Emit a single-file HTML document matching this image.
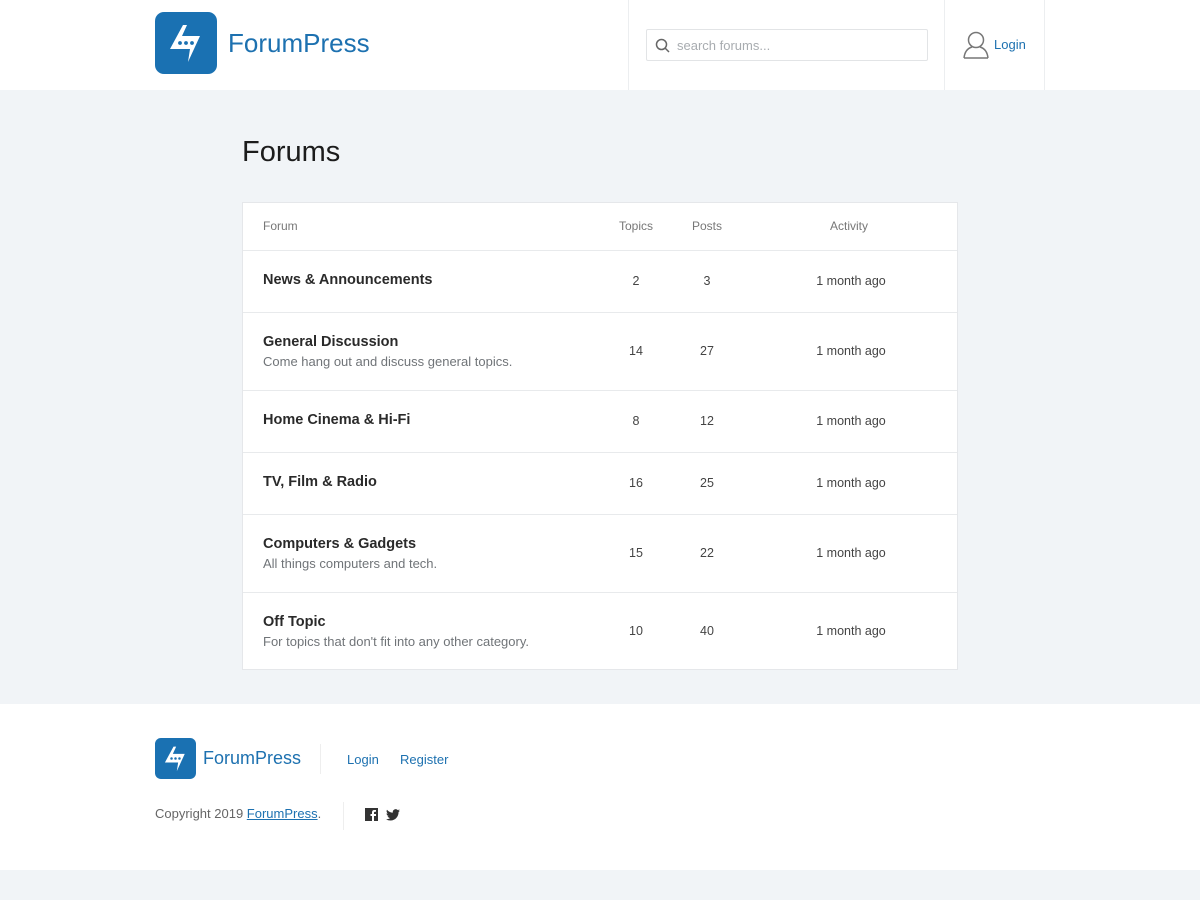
<!DOCTYPE html>
<html><head><meta charset="utf-8"><style>
*{box-sizing:border-box;margin:0;padding:0}
body{width:1200px;height:900px;background:#f1f4f7;font-family:"Liberation Sans",sans-serif;color:#222;position:relative;overflow:hidden}
.hdr{position:absolute;left:0;top:0;width:1200px;height:90px;background:#fff}
.vl{position:absolute;top:0;height:90px;width:1px;background:#eceef0}
.brand{position:absolute;font-family:"Liberation Sans",sans-serif;color:#1d71b0}
.search{position:absolute;left:646px;top:29px;width:282px;height:32px;border:1px solid #e2e4e6;border-radius:2px;background:#fff}
.search span{position:absolute;left:30px;top:8px;font-size:13px;color:#a8acb0}
h1{position:absolute;left:242px;top:136px;font-weight:normal;font-size:29px;color:#1c1c1c}
.tbl{position:absolute;left:242px;top:202px;width:716px;height:468px;background:#fff;border:1px solid #e5e7ea}
.row{position:absolute;left:0;width:714px;border-top:1px solid #e8eaec}
.t{position:absolute;left:20px;font-size:14.5px;font-weight:bold;color:#2a2a2a}
.d{position:absolute;left:20px;font-size:13px;color:#707478}
.c{position:absolute;font-size:12.5px;color:#444;text-align:center;width:80px}
.h{position:absolute;font-size:12px;color:#777;top:16px}
.ftr{position:absolute;left:0;top:704px;width:1200px;height:166px;background:#fff}
a{color:#1d71b0;text-decoration:none}
</style></head><body>
<div class="hdr">
<svg style="position:absolute;left:155px;top:12px" width="62" height="62" viewBox="0 0 62 62"><rect width="62" height="62" rx="9" fill="#1a71b2"/><path d="M28 13 H32 L27 24 H45 L33 50 L35 37 H15 Z" fill="#fff"/><circle cx="25" cy="31" r="1.9" fill="#1a71b2"/><circle cx="31" cy="31" r="1.9" fill="#1a71b2"/><circle cx="37" cy="31" r="1.9" fill="#1a71b2"/></svg>
<div class="brand" style="left:228px;top:28px;font-size:26px">ForumPress</div>
<div class="vl" style="left:628px"></div><div class="vl" style="left:944px"></div><div class="vl" style="left:1044px"></div>
<div class="search"><svg style="position:absolute;left:8px;top:8px" width="15" height="15" viewBox="0 0 15 15"><circle cx="6.5" cy="6.5" r="5" fill="none" stroke="#666" stroke-width="1.5"/><path d="M10 10L14 14" stroke="#666" stroke-width="1.5"/></svg><span>search forums...</span></div>
<svg style="position:absolute;left:962px;top:30px" width="28" height="30" viewBox="0 0 28 30"><circle cx="14" cy="10" r="7.5" fill="none" stroke="#777" stroke-width="1.5"/><path d="M2 28 Q3 19 10 17 M26 28 Q25 19 18 17 M2 28 H26" fill="none" stroke="#777" stroke-width="1.5"/></svg>
<a style="position:absolute;left:994px;top:37px;font-size:13px">Login</a>
</div>
<h1>Forums</h1>
<div class="tbl">
<div class="h" style="left:20px">Forum</div><div class="h" style="left:376px">Topics</div><div class="h" style="left:449px">Posts</div><div class="h" style="left:587px">Activity</div>
<div class="row" style="top:47px;height:62px"><div class="t" style="top:21px">News &amp; Announcements</div><div class="c" style="left:353px;top:23px">2</div><div class="c" style="left:424px;top:23px">3</div><div class="c" style="left:558px;top:23px;width:100px">1 month ago</div></div>
<div class="row" style="top:109px;height:78px"><div class="t" style="top:21px">General Discussion</div><div class="d" style="top:41px">Come hang out and discuss general topics.</div><div class="c" style="left:353px;top:31px">14</div><div class="c" style="left:424px;top:31px">27</div><div class="c" style="left:558px;top:31px;width:100px">1 month ago</div></div>
<div class="row" style="top:187px;height:62px"><div class="t" style="top:21px">Home Cinema &amp; Hi-Fi</div><div class="c" style="left:353px;top:23px">8</div><div class="c" style="left:424px;top:23px">12</div><div class="c" style="left:558px;top:23px;width:100px">1 month ago</div></div>
<div class="row" style="top:249px;height:62px"><div class="t" style="top:21px">TV, Film &amp; Radio</div><div class="c" style="left:353px;top:23px">16</div><div class="c" style="left:424px;top:23px">25</div><div class="c" style="left:558px;top:23px;width:100px">1 month ago</div></div>
<div class="row" style="top:311px;height:78px"><div class="t" style="top:21px">Computers &amp; Gadgets</div><div class="d" style="top:41px">All things computers and tech.</div><div class="c" style="left:353px;top:31px">15</div><div class="c" style="left:424px;top:31px">22</div><div class="c" style="left:558px;top:31px;width:100px">1 month ago</div></div>
<div class="row" style="top:389px;height:78px"><div class="t" style="top:21px">Off Topic</div><div class="d" style="top:41px">For topics that don't fit into any other category.</div><div class="c" style="left:353px;top:31px">10</div><div class="c" style="left:424px;top:31px">40</div><div class="c" style="left:558px;top:31px;width:100px">1 month ago</div></div>
</div>
<div class="ftr">
<svg style="position:absolute;left:155px;top:34px" width="41" height="41" viewBox="0 0 62 62"><rect width="62" height="62" rx="9" fill="#1a71b2"/><path d="M28 13 H32 L27 24 H45 L33 50 L35 37 H15 Z" fill="#fff"/><circle cx="25" cy="31" r="1.9" fill="#1a71b2"/><circle cx="31" cy="31" r="1.9" fill="#1a71b2"/><circle cx="37" cy="31" r="1.9" fill="#1a71b2"/></svg>
<div class="brand" style="left:203px;top:44px;font-size:18px">ForumPress</div>
<div style="position:absolute;left:320px;top:40px;width:1px;height:30px;background:#eee"></div>
<a style="position:absolute;left:347px;top:48px;font-size:13px">Login</a><a style="position:absolute;left:400px;top:48px;font-size:13px">Register</a>
<div style="position:absolute;left:155px;top:102px;font-size:13px;color:#666">Copyright 2019 <a style="text-decoration:underline">ForumPress</a>.</div>
<div style="position:absolute;left:343px;top:98px;width:1px;height:28px;background:#eee"></div>
<svg style="position:absolute;left:365px;top:104px" width="13" height="13" viewBox="0 0 13 13"><rect width="13" height="13" fill="#333"/><path d="M9 13V8H11V6H9V4.5Q9 3.7 10 3.7H11V2H9.3Q7 2 7 4.5V6H5.5V8H7V13Z" fill="#fff"/></svg>
<svg style="position:absolute;left:386px;top:105px" width="14" height="12" viewBox="0 0 24 20"><path d="M24 2.4a10 10 0 0 1-2.8.8A5 5 0 0 0 23.3.4a10 10 0 0 1-3.1 1.2A4.9 4.9 0 0 0 11.8 6 14 14 0 0 1 1.7.9a4.9 4.9 0 0 0 1.5 6.6 4.9 4.9 0 0 1-2.2-.6 4.9 4.9 0 0 0 3.9 4.8 4.9 4.9 0 0 1-2.2.1 4.9 4.9 0 0 0 4.6 3.4A9.9 9.9 0 0 1 0 17.2 14 14 0 0 0 7.5 19.4c9 0 14-7.5 14-14v-.6A10 10 0 0 0 24 2.4z" fill="#333"/></svg>
</div>
</body></html>
